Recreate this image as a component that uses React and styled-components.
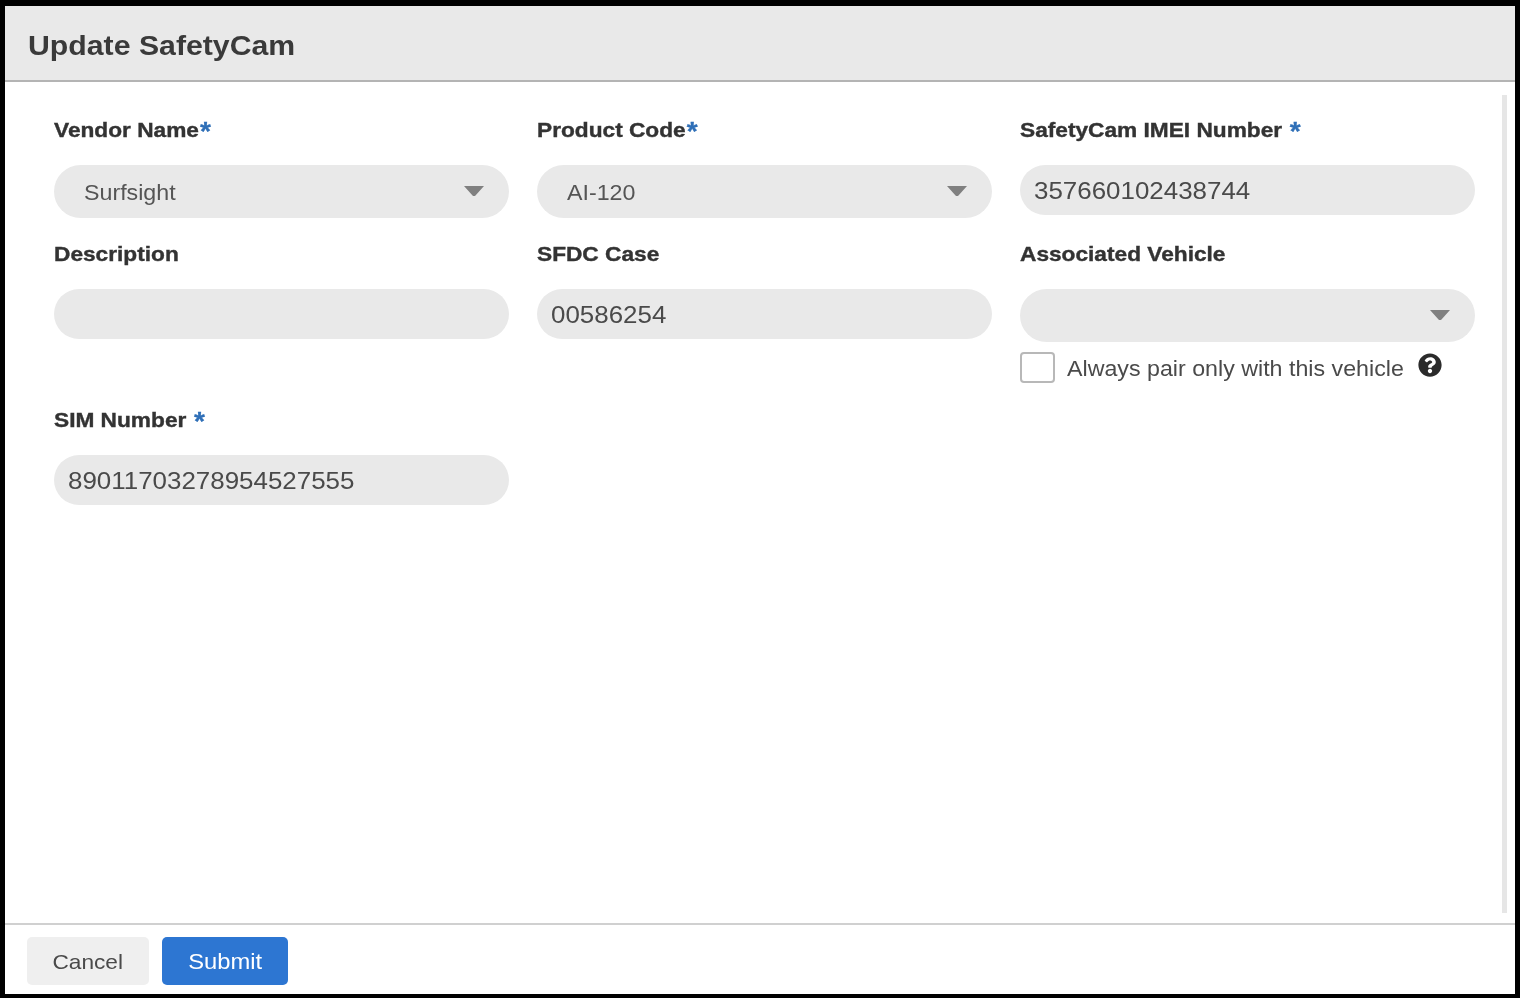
import React from "react";
import styled, { createGlobalStyle } from "styled-components";
import { FaQuestionCircle } from "react-icons/fa";

const GlobalStyle = createGlobalStyle`
  html, body {
    margin: 0;
    padding: 0;
    background: #000;
  }
  * {
    box-sizing: border-box;
  }
`;

const Caret = () => (
  <CaretIcon viewBox="0 0 20 10">
    <path d="M0 0h20L11.5 9.4a2 2 0 0 1-3 0z" fill="#808080" />
  </CaretIcon>
);

const Field = ({ label, gap, required, value, select, children }) => (
  <FieldBox>
    <Label>
      <Wide>
        {label}
        {required && <Star $gap={gap}>*</Star>}
      </Wide>
    </Label>
    {select ? (
      <SelectBox>
        <SelectText>{value}</SelectText>
        <Caret />
      </SelectBox>
    ) : (
      <InputBox>
        <Wide>{value}</Wide>
      </InputBox>
    )}
    {children}
  </FieldBox>
);

export default function App() {
  return (
    <>
      <GlobalStyle />
      <Frame>
        <Header>
          <Title>Update SafetyCam</Title>
        </Header>
        <Body>
          <Form>
            <Field label="Vendor Name" required select value="Surfsight" />
            <Field label="Product Code" required select value="AI-120" />
            <Field label="SafetyCam IMEI Number" required gap value="357660102438744" />
            <Field label="Description" value="" />
            <Field label="SFDC Case" value="00586254" />
            <Field label="Associated Vehicle" select value="">
              <CheckRow>
                <CheckBox />
                <CheckLabel>Always pair only with this vehicle</CheckLabel>
                <HelpIcon />
              </CheckRow>
            </Field>
            <Field label="SIM Number" required gap value="89011703278954527555" />
          </Form>
          <ScrollThumb />
        </Body>
        <Footer>
          <CancelButton>
            <WideCentered>Cancel</WideCentered>
          </CancelButton>
          <SubmitButton>
            <WideCentered>Submit</WideCentered>
          </SubmitButton>
        </Footer>
      </Frame>
    </>
  );
}

const Frame = styled.div`
  width: 1520px;
  height: 998px;
  background: #fff;
  border-style: solid;
  border-color: #000;
  border-width: 6px 5px 4px 5px;
  display: flex;
  flex-direction: column;
  font-family: "Liberation Sans", Arial, sans-serif;
  overflow: hidden;
  filter: blur(0.7px);
`;

const Wide = styled.span`
  display: inline-block;
  transform: scaleX(1.08);
  transform-origin: left center;
  white-space: nowrap;
`;

const WideCentered = styled(Wide)`
  transform-origin: center;
  padding-top: 2px;
`;

const Header = styled.div`
  height: 76px;
  flex: none;
  background: #e9e9e9;
  border-bottom: 2px solid #b4b4b4;
  padding: 6px 0 0 23px;
  display: flex;
  align-items: center;
`;

const Title = styled(Wide).attrs({ as: "h1" })`
  margin: 0;
  font-size: 28px;
  font-weight: 700;
  color: #3a3a3a;
`;

const Body = styled.div`
  flex: 1;
  display: flex;
  justify-content: space-between;
  padding: 13px 8px 10px 49px;
`;

const Form = styled.div`
  width: 1421px;
  padding-top: 23px;
  display: grid;
  grid-template-columns: repeat(3, 455px);
  column-gap: 28px;
  grid-auto-rows: min-content;
`;

const FieldBox = styled.div`
  display: flex;
  flex-direction: column;
  margin-bottom: 24px;
`;

const Label = styled.label`
  height: 24px;
  margin-bottom: 23px;
  font-size: 21px;
  line-height: 24px;
  font-weight: 700;
  color: #333;
  -webkit-text-stroke: 0.4px #333;
`;

const Star = styled.span`
  display: inline-block;
  font-size: 26px;
  line-height: 20px;
  color: #2f6fb7;
  -webkit-text-stroke: 0.3px #2f6fb7;
  transform: translateY(3px);
  margin-left: ${(p) => (p.$gap ? "7px" : "1px")};
`;

const SelectBox = styled.div`
  height: 53px;
  border-radius: 27px;
  background: #e9e9e9;
  padding: 0 25px 0 30px;
  display: flex;
  align-items: center;
  justify-content: space-between;
`;

const SelectText = styled(Wide)`
  font-size: 21.5px;
  color: #555;
  padding-top: 3px;
`;

const CaretIcon = styled.svg`
  width: 20px;
  height: 10px;
  margin-bottom: 2px;
`;

const InputBox = styled.div`
  height: 50px;
  border-radius: 25px;
  background: #e9e9e9;
  padding: 0 14px;
  font-size: 24px;
  line-height: 52px;
  color: #4a4a4a;
`;

const CheckRow = styled.div`
  display: flex;
  align-items: center;
  margin-top: 10px;
  height: 31px;
  margin-bottom: 1px;
`;

const CheckBox = styled.span`
  width: 35px;
  height: 31px;
  flex: none;
  background: #fff;
  border: 2px solid #b8b8b8;
  border-radius: 4px;
  margin-right: 12px;
`;

const CheckLabel = styled(Wide)`
  width: 337px;
  font-size: 21.5px;
  color: #4a4a4a;
  padding-top: 3px;
`;

const HelpIcon = styled(FaQuestionCircle)`
  width: 24px;
  height: 24px;
  color: #2b2b2b;
  margin-left: 14px;
  margin-top: -6px;
  flex: none;
`;

const ScrollThumb = styled.div`
  width: 5px;
  flex: none;
  background: #e6e6e6;
`;

const Footer = styled.div`
  height: 71px;
  flex: none;
  border-top: 2px solid #d0d0d0;
  padding: 12px 0 0 22px;
  display: flex;
  gap: 13px;
  align-items: flex-start;
`;

const CancelButton = styled.button`
  width: 122px;
  height: 48px;
  border: none;
  border-radius: 5px;
  background: #efefef;
  color: #4a4a4a;
  font-family: inherit;
  font-size: 21px;
`;

const SubmitButton = styled.button`
  width: 126px;
  height: 48px;
  border: none;
  border-radius: 5px;
  background: #2d76d2;
  color: #fff;
  font-family: inherit;
  font-size: 22px;
`;
